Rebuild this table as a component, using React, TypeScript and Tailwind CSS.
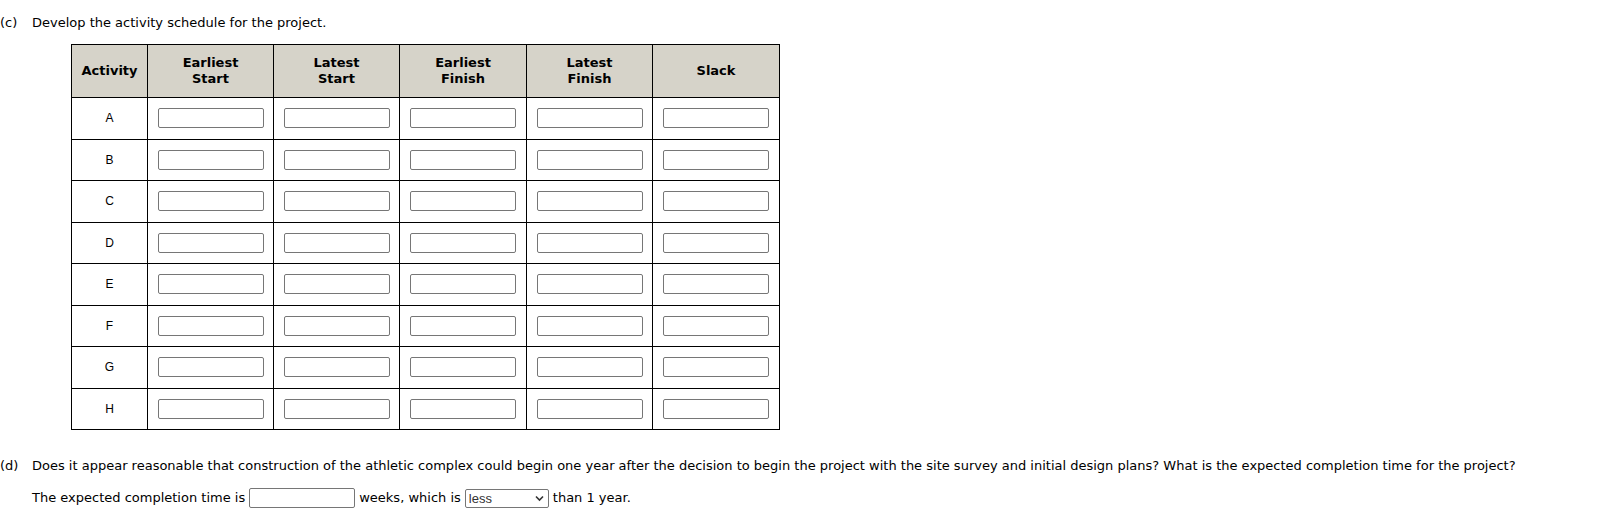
import React from "react";

const activities = ["A", "B", "C", "D", "E", "F", "G", "H"];
const columns = [
  { top: "Earliest", bottom: "Start", w: "w-[126px]" },
  { top: "Latest", bottom: "Start", w: "w-[126px]" },
  { top: "Earliest", bottom: "Finish", w: "w-[127px]" },
  { top: "Latest", bottom: "Finish", w: "w-[126px]" },
  { top: "Slack", bottom: "", w: "w-[127px]" },
];

function Box({ className = "" }: { className?: string }) {
  return (
    <input
      type="text"
      className={`h-[20px] w-[106px] rounded-[2px] border border-[#767676] bg-white px-1 align-middle outline-none ${className}`}
    />
  );
}

export default function App() {
  return (
    <div className="min-h-[530px] w-[1604px] bg-white text-[13px] leading-[16px] text-[#000] [font-family:'DejaVu_Sans',Verdana,sans-serif]">
      <div className="flex pt-[15px]">
        <span className="w-[32px]">(c)</span>
        <span>Develop the activity schedule for the project.</span>
      </div>

      <table className="ml-[71px] mt-[13px] border-collapse">
        <thead>
          <tr className="h-[53px] bg-[#d6d3c9]">
            <th className="w-[76px] border border-black text-center font-bold">Activity</th>
            {columns.map((c, i) => (
              <th key={i} className={`${c.w} border border-black text-center font-bold`}>
                {c.top}
                {c.bottom && <br />}
                {c.bottom}
              </th>
            ))}
          </tr>
        </thead>
        <tbody>
          {activities.map((a) => (
            <tr key={a} className="h-[41.5px]">
              <td className="border border-black text-center text-[12px] [font-family:'Liberation_Sans',Arial,sans-serif]">
                {a}
              </td>
              {columns.map((_, i) => (
                <td key={i} className="border border-black text-center">
                  <Box />
                </td>
              ))}
            </tr>
          ))}
        </tbody>
      </table>

      <div className="mt-[28px] flex">
        <span className="w-[32px]">(d)</span>
        <span>
          Does it appear reasonable that construction of the athletic complex could begin one year after the decision to
          begin the project with the site survey and initial design plans? What is the expected completion time for the
          project?
        </span>
      </div>

      <div className="mt-[14px] flex items-center gap-[4px] pl-[32px]">
        <span>The expected completion time is</span>
        <Box className="w-[106px]" />
        <span>weeks, which is</span>
        <div className="relative">
          <select
            defaultValue="less"
            className="h-[19px] w-[84px] appearance-none rounded-[2px] border border-[#767676] bg-white pl-[3px] text-[13px] leading-[17px] text-[#333] outline-none [font-family:'Liberation_Sans',Arial,sans-serif]"
          >
            <option value="less">less</option>
            <option value="more">more</option>
          </select>
          <svg
            className="pointer-events-none absolute right-[5px] top-[6px]"
            width="9"
            height="7"
            viewBox="0 0 9 7"
            fill="none"
          >
            <path d="M1 1.5 L4.5 5 L8 1.5" stroke="#333" strokeWidth="1.6" />
          </svg>
        </div>
        <span>than 1 year.</span>
      </div>
    </div>
  );
}
